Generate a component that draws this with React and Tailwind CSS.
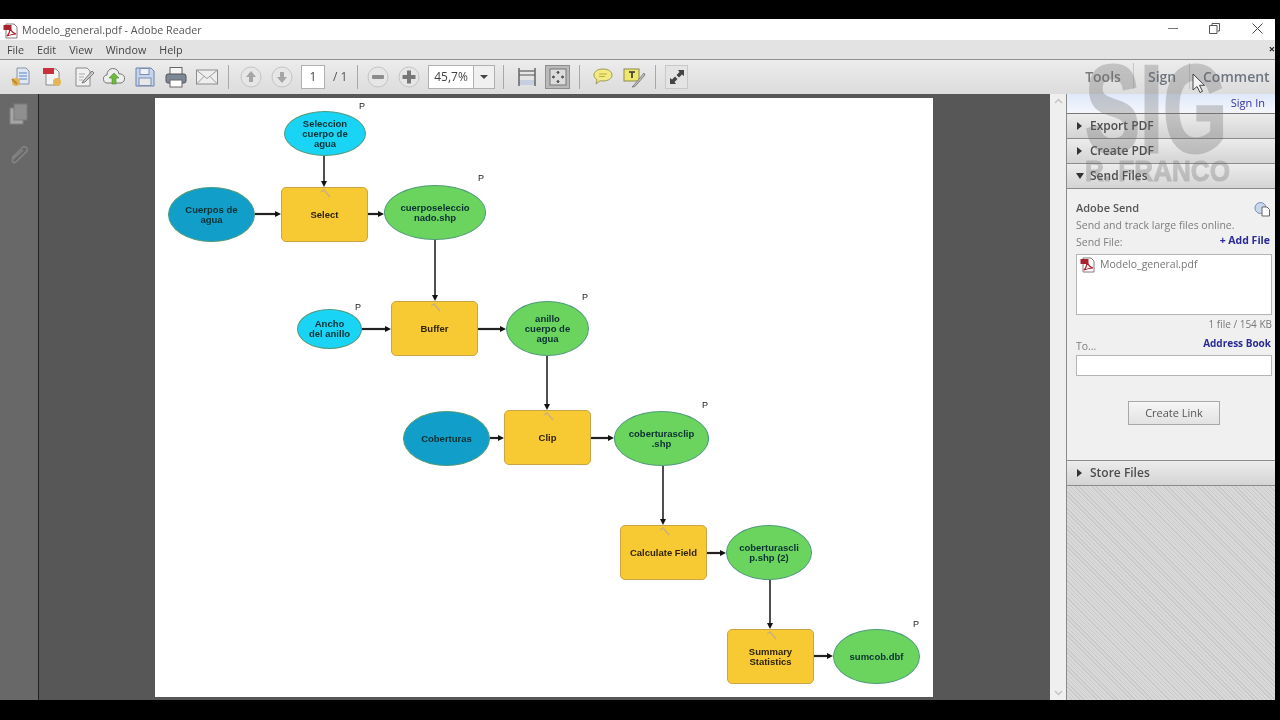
import { Fragment } from "react";

const UI = "font-['Open_Sans',sans-serif]";

const shapes = [
  { kind: "oval", color: "bg-[#1ad4f5]", x: 284, y: 111, w: 82, h: 45, lines: ["Seleccion", "cuerpo de", "agua"] },
  { kind: "oval", color: "bg-[#119ec9]", x: 168, y: 187, w: 87, h: 55, lines: ["Cuerpos de", "agua"] },
  { kind: "box", x: 281, y: 187, w: 87, h: 55, lines: ["Select"] },
  { kind: "oval", color: "bg-[#6bd45f]", x: 384, y: 185, w: 102, h: 55, lines: ["cuerposeleccio", "nado.shp"] },
  { kind: "oval", color: "bg-[#1ad4f5]", x: 297, y: 309, w: 65, h: 40, lines: ["Ancho", "del anillo"] },
  { kind: "box", x: 391, y: 301, w: 87, h: 55, lines: ["Buffer"] },
  { kind: "oval", color: "bg-[#6bd45f]", x: 506, y: 301, w: 83, h: 55, lines: ["anillo", "cuerpo de", "agua"] },
  { kind: "oval", color: "bg-[#119ec9]", x: 403, y: 411, w: 87, h: 55, lines: ["Coberturas"] },
  { kind: "box", x: 504, y: 410, w: 87, h: 55, lines: ["Clip"] },
  { kind: "oval", color: "bg-[#6bd45f]", x: 614, y: 411, w: 95, h: 55, lines: ["coberturasclip", ".shp"] },
  { kind: "box", x: 620, y: 525, w: 87, h: 55, lines: ["Calculate Field"] },
  { kind: "oval", color: "bg-[#6bd45f]", x: 726, y: 525, w: 86, h: 55, lines: ["coberturascli", "p.shp (2)"] },
  { kind: "box", x: 727, y: 629, w: 87, h: 55, lines: ["Summary", "Statistics"] },
  { kind: "oval", color: "bg-[#6bd45f]", x: 833, y: 629, w: 87, h: 55, lines: ["sumcob.dbf"] },
];

const links = [
  [324, 156, 324, 187],
  [255, 214, 281, 214],
  [368, 214, 384, 214],
  [435, 240, 435, 301],
  [362, 329, 391, 329],
  [478, 329, 506, 329],
  [547, 356, 547, 410],
  [490, 438, 504, 438],
  [591, 438, 614, 438],
  [663, 466, 663, 525],
  [707, 553, 726, 553],
  [770, 580, 770, 629],
  [814, 656, 833, 656],
];

const params = [
  [359, 101],
  [478, 173],
  [355, 302],
  [582, 292],
  [702, 400],
  [913, 619],
];

function Diagram() {
  return (
    <div className="absolute inset-0">
      <svg className="absolute left-0 top-0" width="778" height="599" viewBox="155 98 778 599">
        {links.map(([x1, y1, x2, y2], i) => {
          const down = x1 === x2;
          return (
            <Fragment key={i}>
              <line x1={x1} y1={y1} x2={down ? x2 : x2 - 5} y2={down ? y2 - 5 : y2} stroke="#222" strokeWidth={down ? 1.6 : 2.2} />
              <polygon
                points={down ? `${x2 - 3},${y2 - 6} ${x2 + 3},${y2 - 6} ${x2},${y2}` : `${x2 - 6},${y2 - 3} ${x2 - 6},${y2 + 3} ${x2},${y2}`}
                fill="#111"
              />
            </Fragment>
          );
        })}
      </svg>
      {shapes.map((s) => (
        <div
          key={s.lines[0]}
          className={
            "absolute flex flex-col items-center justify-center border font-['Liberation_Sans',sans-serif] font-bold text-[9.5px] leading-[10px] " +
            (s.kind === "box"
              ? "rounded-[5px] border-[#c9a544] bg-[#f7c933] text-[#2f2406]"
              : "rounded-[50%] border-[#4f9a7a] text-[#0a3030] " + s.color)
          }
          style={{ left: s.x - 155, top: s.y - 98, width: s.w, height: s.h }}
        >
          {s.lines.map((l) => (
            <span key={l} className="whitespace-nowrap">{l}</span>
          ))}
          {s.kind === "box" && (
            <svg className="absolute left-1/2 top-[1px] -ml-[5px]" width="12" height="9" viewBox="0 0 12 9">
              <path d="M1 3 L4 1 L10 8" stroke="#c9b27a" strokeWidth="1.5" fill="none" />
            </svg>
          )}
        </div>
      ))}
      {params.map(([x, y]) => (
        <span
          key={x}
          className="absolute font-['Liberation_Sans',sans-serif] text-[9px] leading-[10px] text-[#222]"
          style={{ left: x - 155, top: y - 98 }}
        >
          P
        </span>
      ))}
    </div>
  );
}

function PdfIcon({ size = 16 }) {
  return (
    <svg width={size} height={size} viewBox="0 0 16 16">
      <path d="M3 1h8l3 3v11H3z" fill="#fff" stroke="#8a7a7a" />
      <rect x="0.5" y="2" width="8" height="5" fill="#a8232f" />
      <path d="M4 13c2-2 3-5 3-8 1 3 3 5 6 6-3 0-6 1-9 2z" fill="none" stroke="#b3202c" strokeWidth="1.2" />
    </svg>
  );
}

function Icon({ children, cx = 31 }) {
  return (
    <div className="flex h-full shrink-0 items-center justify-center" style={{ width: cx }}>
      <svg width="24" height="24" viewBox="0 0 24 24">{children}</svg>
    </div>
  );
}

function Sep({ width = 22 }) {
  return (
    <div className="flex h-full shrink-0 items-center justify-center" style={{ width }}>
      <div className="h-[24px] w-px bg-[#a8a8a8]" />
    </div>
  );
}

function RoundBtn({ kind, tone = "#a5a5a5", fill = "#8c8c8c" }) {
  return (
    <Icon>
      <circle cx="12" cy="12" r="10" fill="#e6e6e6" stroke="#c4c4c4" />
      {kind === "up" && <path d="M12 6l5 6h-3v5h-4v-5H7z" fill={tone} />}
      {kind === "down" && <path d="M12 18l5-6h-3V7h-4v5H7z" fill={tone} />}
      {kind === "minus" && <rect x="6" y="10" width="12" height="4" rx="1" fill={fill} />}
      {kind === "plus" && <path d="M10 5.5h4V10h4.5v4H14v4.5h-4V14H5.5v-4H10z" fill={fill} />}
    </Icon>
  );
}

function Toolbar() {
  return (
    <div className="flex h-[35px] shrink-0 items-center justify-between border-t border-[#8f8f8f] bg-gradient-to-b from-[#ececec] to-[#dcdcdc]">
      <div className="flex h-full items-center pl-[5px]">
        <Icon>
          <path d="M8 3h9l3 3v13H8z" fill="#dfe6f4" stroke="#8a94a8" />
          <path d="M10 8h8M10 11h8M10 14h8" stroke="#5c82c8" />
          <circle cx="7" cy="17" r="4" fill="#e3b458" />
          <path d="M3 14l5 5" stroke="#b78a34" strokeWidth="2" />
        </Icon>
        <Icon>
          <path d="M6 4h10l3 3v13H6z" fill="#f4f4f4" stroke="#8a8a8a" />
          <rect x="3" y="3" width="11" height="6" fill="#c9303e" />
          <circle cx="17" cy="17" r="4" fill="#e3b458" />
        </Icon>
        <Icon>
          <path d="M5 3h11l3 3v15H5z" fill="#f1f1f1" stroke="#8a8a8a" />
          <path d="M8 9h6M8 12h5M8 15h4" stroke="#a9a9a9" />
          <path d="M21 6l-8 9-2 3 3-1 9-9z" fill="#c8c8c8" stroke="#666" strokeWidth="0.8" />
        </Icon>
        <Icon>
          <path d="M6 18a4 4 0 0 1-1-8 6 6 0 0 1 12-1 4.5 4.5 0 0 1 2 9z" fill="#eee" stroke="#777" />
          <path d="M12 8l5 5h-3v6h-4v-6H7z" fill="#6dbb3c" stroke="#4d8f2a" strokeWidth="0.6" />
        </Icon>
        <Icon>
          <path d="M3 3h15l3 3v15H3z" fill="#c5d5ee" stroke="#6d82a8" />
          <rect x="7" y="3.5" width="9" height="6" fill="#eef2f8" stroke="#7c8db0" />
          <rect x="6" y="13" width="12" height="7.5" fill="#e8e8e8" stroke="#7c8db0" />
        </Icon>
        <Icon>
          <rect x="6" y="2.5" width="12" height="7" fill="#f4f4f4" stroke="#666" />
          <rect x="2" y="9" width="20" height="9" rx="2" fill="#7d8896" stroke="#555" />
          <rect x="6" y="15" width="12" height="7" fill="#fff" stroke="#666" />
        </Icon>
        <Icon>
          <rect x="1.5" y="5" width="21" height="14" fill="#eee" stroke="#8c8c8c" />
          <path d="M2 5.5l10 8 10-8M2 18.5l7-7M22 18.5l-7-7" fill="none" stroke="#9b9b9b" />
        </Icon>
        <Sep width={13} />
        <RoundBtn kind="up" />
        <RoundBtn kind="down" />
        <div className="ml-[4px] flex h-[24px] w-[24px] items-center justify-center border border-[#b0b0b0] bg-white text-[12px] text-[#444]">1</div>
        <span className="ml-[8px] w-[19px] text-[12px] text-[#555]">/ 1</span>
        <Sep width={10} />
        <RoundBtn kind="minus" />
        <RoundBtn kind="plus" fill="#777" />
        <div className="ml-[4px] flex h-[24px] w-[67px] items-stretch border border-[#b0b0b0] bg-white text-[12px] text-[#444]">
          <span className="flex flex-1 items-center justify-center">45,7%</span>
          <span className="flex w-[21px] items-center justify-center border-l border-[#b0b0b0] bg-[#f0f0f0]">
            <span className="h-0 w-0 border-x-[4px] border-t-[4px] border-x-transparent border-t-[#444]" />
          </span>
        </div>
        <Sep width={16} />
        <Icon>
          <path d="M4 3v18M20 3v18" stroke="#666" strokeWidth="1.5" />
          <path d="M4 6h16M4 18h16" stroke="#777" strokeWidth="1.5" />
          <rect x="5" y="15" width="14" height="5" fill="#c5cfe0" />
          <path d="M4 10h16" stroke="#555" />
        </Icon>
        <div className="ml-[3px] mr-[2px] flex h-[24px] w-[25px] shrink-0 items-center justify-center border border-[#8e8e8e] bg-[#b9b9b9]">
          <svg width="18" height="18" viewBox="0 0 18 18">
            <rect x="1" y="1" width="16" height="16" fill="#dcdcdc" stroke="#777" />
            <path d="M9 3v3M9 12v3M3 9h3M12 9h3" stroke="#555" strokeWidth="1.5" />
            <path d="M9 3l-2 2h4zM9 15l-2-2h4zM3 9l2-2v4zM15 9l-2-2v4z" fill="#555" />
          </svg>
        </div>
        <Sep width={15} />
        <Icon>
          <path d="M12 4c5.5 0 9 2.6 9 6s-3.5 6-9 6c-1 0-2 0-3-.3L5 19l1-4.4C4 13.5 3 12 3 10c0-3.4 3.5-6 9-6z" fill="#f3ea82" stroke="#9b9b55" />
          <path d="M8 9h8M8 11.5h6" stroke="#b9ad3c" />
        </Icon>
        <Icon>
          <rect x="2" y="4" width="15" height="12" fill="#efe66c" stroke="#8d8a50" />
          <path d="M7 7h6M10 7v6" stroke="#333" strokeWidth="1.6" />
          <path d="M22 8L12 20l-2 2 3-.5L23 10z" fill="#bdbdbd" stroke="#666" strokeWidth="0.7" />
        </Icon>
        <Sep width={13} />
        <div className="ml-[3px] flex h-[24px] w-[23px] items-center justify-center border border-[#c8c8c8] bg-[#e4e4e4]">
          <svg width="18" height="18" viewBox="0 0 18 18">
            <path d="M10 2h6v6l-2-1.5-3 3-2.5-2.5 3-3zM8 16H2v-6l2 1.5 3-3 2.5 2.5-3 3z" fill="#444" />
          </svg>
        </div>
      </div>
      <div className="flex h-full items-center pb-[2px] pr-[7px] text-[14px] font-semibold text-[#7b7b7b]">
        <span className="w-[50px] text-center">Tools</span>
        <div className="ml-[5px] mr-[14px] h-[26px] w-px bg-[#c6c6c6]" />
        <span className="w-[28px] text-center text-[#6e7480]">Sign</span>
        <div className="mx-[13px] h-[26px] w-px bg-[#c6c6c6]" />
        <span className="w-[65px] text-center text-[#6e7480]">Comment</span>
      </div>
    </div>
  );
}

function Section({ label, open }) {
  return (
    <div className="flex h-[25px] shrink-0 items-center border-b border-[#8b8b8b] bg-gradient-to-b from-[#ececec] to-[#d4d4d4] pl-[9px] text-[12px] font-semibold text-[#4d4d4d]">
      {open ? (
        <span className="mr-[6px] h-0 w-0 border-x-[4px] border-t-[6px] border-x-transparent border-t-[#333]" />
      ) : (
        <span className="ml-[1px] mr-[8px] h-0 w-0 border-y-[4px] border-l-[5px] border-y-transparent border-l-[#333]" />
      )}
      {label}
    </div>
  );
}

function SidePanel() {
  return (
    <div className="flex w-[209px] shrink-0 flex-col border-l border-[#8a8a8a] bg-[#f0f0f0]">
      <div className="flex h-[20px] shrink-0 items-center justify-end border-b border-[#777] bg-gradient-to-b from-[#dfe9fb] to-[#f4f6fb] pr-[10px] text-[11px] text-[#333399]">
        Sign In
      </div>
      <Section label="Export PDF" />
      <Section label="Create PDF" />
      <Section label="Send Files" open />
      <div className="flex h-[272px] shrink-0 flex-col border-b border-[#8b8b8b] pl-[9px] pr-[3px] pt-[9px]">
        <div className="flex items-center justify-between">
          <span className="text-[11px] font-semibold leading-[16px] text-[#555]">Adobe Send</span>
          <svg width="17" height="17" viewBox="0 0 17 17" className="mt-[3px] mr-[1px]">
            <circle cx="6.5" cy="7" r="5.5" fill="#c9d7ee" stroke="#7b8eb0" />
            <path d="M8 6h5l2.5 2.5V15H8z" fill="#fff" stroke="#666" />
          </svg>
        </div>
        <span className="-mt-[1px] text-[10.5px] leading-[16px] text-[#7e7e7e]">Send and track large files online.</span>
        <div className="mt-[1px] flex items-center justify-between">
          <span className="text-[10.5px] leading-[17px] text-[#7e7e7e]">Send File:</span>
          <span className="-mt-[5px] mr-[2px] text-[10.5px] font-bold leading-[14px] text-[#2b2b96]">+ Add File</span>
        </div>
        <div className="mt-[3px] flex h-[61px] shrink-0 items-start gap-[4px] border border-[#b5b5b5] bg-white pl-[3px] pt-[2px] text-[10.5px] leading-[14px] text-[#777]">
          <PdfIcon />
          Modelo_general.pdf
        </div>
        <span className="mt-[2px] self-end text-[10px] leading-[14px] text-[#777]">1 file / 154 KB</span>
        <div className="mt-[5px] flex items-center justify-between">
          <span className="mt-[3px] text-[10.5px] leading-[14px] text-[#7e7e7e]">To...</span>
          <span className="-mt-[3px] mr-[1px] text-[10px] font-bold leading-[14px] text-[#2b2b96]">Address Book</span>
        </div>
        <div className="mt-[2px] h-[21px] shrink-0 border border-[#b5b5b5] bg-white" />
        <div className="mt-[25px] flex h-[24px] w-[92px] shrink-0 items-center justify-center self-center border border-[#a8a8a8] bg-gradient-to-b from-[#f6f6f6] to-[#e2e2e2] text-[11px] text-[#555]">
          Create Link
        </div>
      </div>
      <Section label="Store Files" />
      <div className="flex-1 bg-[repeating-linear-gradient(45deg,#c9c9c9_0,#c9c9c9_1px,#d9d9d9_1px,#d9d9d9_3px)]" />
    </div>
  );
}

export default function App() {
  return (
    <div className={"relative flex h-[720px] w-[1280px] flex-col overflow-hidden bg-black blur-[0.5px] " + UI}>
      <div className="h-[19px] shrink-0 bg-black" />
      <div className="flex min-h-0 w-[1275px] flex-1 flex-col">
        {/* title bar */}
        <div className="flex h-[21px] shrink-0 items-center justify-between bg-white pl-[3px] text-[10.75px] text-[#555]">
          <div className="mt-[2px] flex items-center gap-[3px]">
            <PdfIcon />
            Modelo_general.pdf - Adobe Reader
          </div>
          <div className="-mt-[3px] flex items-center text-[#555]">
            <span className="mr-[31px] h-px w-[10px] bg-[#777]" />
            <svg width="11" height="11" viewBox="0 0 11 11" className="mr-[32px]">
              <path d="M3 2.5V.5h7.5V8H8.5M.5 2.5H8V10.5H.5z" fill="none" stroke="#555" />
            </svg>
            <svg width="11" height="11" viewBox="0 0 11 11" className="mr-[12px]">
              <path d="M.5.5l10 10M10.5.5l-10 10" stroke="#444" />
            </svg>
          </div>
        </div>
        {/* menu */}
        <div className="relative flex h-[19px] shrink-0 items-center gap-[13px] bg-[#e3e3e3] pl-[7px] pt-[2px] text-[10.75px] text-[#444]">
          <span>File</span>
          <span>Edit</span>
          <span>View</span>
          <span>Window</span>
          <span>Help</span>
          <span className="absolute right-0 top-[3px] text-[11px] font-bold leading-[12px] text-[#222]">×</span>
        </div>
        <Toolbar />
        <div className="flex min-h-0 flex-1 bg-[#575757]">
          {/* left nav */}
          <div className="flex w-[39px] shrink-0 flex-col items-center gap-[18px] border-r border-[#222] bg-[#686868] pt-[9px]">
            <svg width="20" height="22" viewBox="0 0 20 22">
              <rect x="1" y="5" width="13" height="16" fill="#a5a5a5" stroke="#808080" />
              <rect x="5" y="1" width="13" height="16" fill="#8f8f8f" stroke="#7a7a7a" />
            </svg>
            <svg width="22" height="22" viewBox="0 0 22 22">
              <path d="M4 15L15 4a3 3 0 0 1 4 4L8 19a2 2 0 0 1-3-3L15 7" fill="none" stroke="#858585" strokeWidth="1.5" />
            </svg>
          </div>
          {/* document */}
          <div className="flex min-w-0 flex-1 pl-[116px] pt-[4px]">
            <div className="relative h-[599px] w-[778px] shrink-0 bg-white">
              <Diagram />
            </div>
          </div>
          {/* scrollbar */}
          <div className="flex w-[16px] shrink-0 flex-col items-center justify-between bg-[#efefef] py-[4px]">
            <svg width="9" height="6" viewBox="0 0 9 6"><path d="M1 5l3.5-3.5L8 5" fill="none" stroke="#c4c4c4" strokeWidth="1.5" /></svg>
            <svg width="9" height="6" viewBox="0 0 9 6"><path d="M1 1l3.5 3.5L8 1" fill="none" stroke="#c4c4c4" strokeWidth="1.5" /></svg>
          </div>
          <SidePanel />
        </div>
      </div>
      <div className="h-[20px] shrink-0 bg-black" />

      {/* watermark over the side panel */}
      <div className="pointer-events-none absolute left-[1085px] top-[62px] h-[128px] w-[146px] overflow-hidden font-['Liberation_Sans',sans-serif] font-bold text-[#6a6a6a] opacity-30">
        <div className="origin-top-left scale-x-[0.66] whitespace-nowrap text-[125px] leading-[94px] [-webkit-text-stroke:3px_#6a6a6a]">SIG</div>
        <div className="origin-top-left scale-x-[0.87] whitespace-nowrap text-[30px] leading-[30px] [-webkit-text-stroke:1px_#6a6a6a]">R. FRANCO</div>
      </div>

      {/* mouse pointer */}
      <svg className="pointer-events-none absolute left-[1192px] top-[73px]" width="14" height="21" viewBox="0 0 14 21">
        <path d="M1 1v16l4-3.5 3 6 2.5-1.2-3-6h5z" fill="#f4f4f4" stroke="#333" strokeWidth="0.9" />
      </svg>
    </div>
  );
}
